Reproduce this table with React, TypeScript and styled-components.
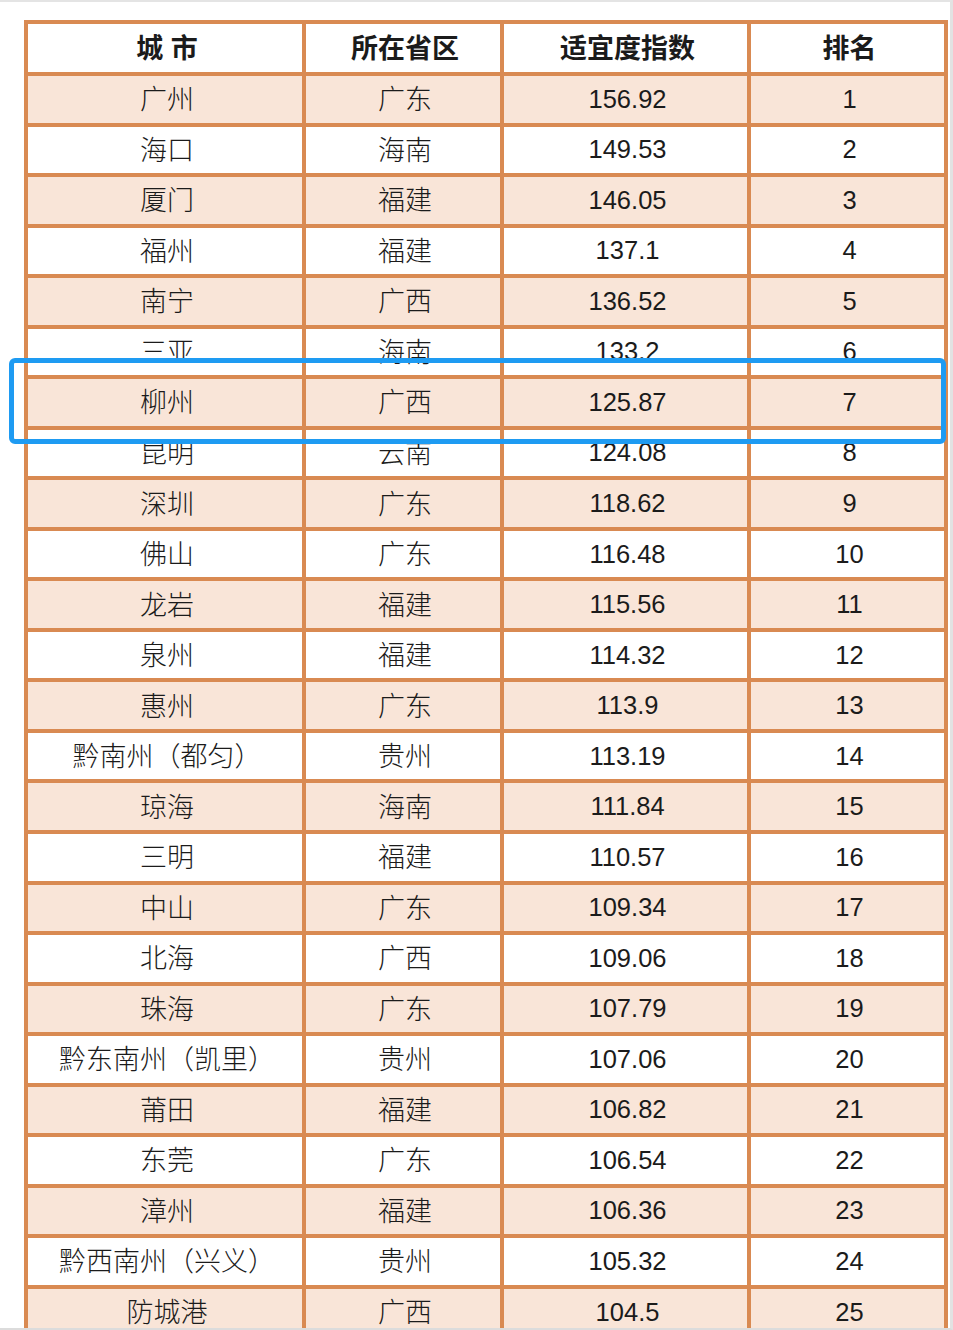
import styled, { createGlobalStyle } from 'styled-components';

const GlobalStyle = createGlobalStyle`
  html, body {
    margin: 0;
    padding: 0;
    background: #ffffff;
  }
`;

const border = '#d98a52';
const fill = '#f9e5d8';

const rows: [string, string, string][] = [
	['广州', '广东', '156.92'],
	['海口', '海南', '149.53'],
	['厦门', '福建', '146.05'],
	['福州', '福建', '137.1'],
	['南宁', '广西', '136.52'],
	['三亚', '海南', '133.2'],
	['柳州', '广西', '125.87'],
	['昆明', '云南', '124.08'],
	['深圳', '广东', '118.62'],
	['佛山', '广东', '116.48'],
	['龙岩', '福建', '115.56'],
	['泉州', '福建', '114.32'],
	['惠州', '广东', '113.9'],
	['黔南州（都匀）', '贵州', '113.19'],
	['琼海', '海南', '111.84'],
	['三明', '福建', '110.57'],
	['中山', '广东', '109.34'],
	['北海', '广西', '109.06'],
	['珠海', '广东', '107.79'],
	['黔东南州（凯里）', '贵州', '107.06'],
	['莆田', '福建', '106.82'],
	['东莞', '广东', '106.54'],
	['漳州', '福建', '106.36'],
	['黔西南州（兴义）', '贵州', '105.32'],
	['防城港', '广西', '104.5'],
];

const Frame = styled.div`
  position: relative;
  box-sizing: border-box;
  height: 1330px;
  overflow: hidden;
  border-top: 2px solid #e4e4e4;
  border-right: 3px solid #e2e2e2;
  border-bottom: 2px solid #dcdcdc;
  padding: 18px 0 0 24px;
  font-family: "Liberation Sans", "Noto Sans CJK SC", sans-serif;
  color: #1b1b1b;
`;

const Table = styled.table`
  width: 924px;
  table-layout: fixed;
  border-collapse: separate;
  border-spacing: 4px;
  background: ${border};
`;

const HeadCell = styled.th`
  height: 48px;
  padding: 0 0 3px 4px;
  box-sizing: border-box;
  background: #ffffff;
  font-size: 27px;
  font-weight: 700;
  text-align: center;
  vertical-align: middle;
`;

const Row = styled.tr<{ $shaded: boolean }>`
  background: ${p => (p.$shaded ? fill : '#ffffff')};
`;

const Cell = styled.td<{ $cjk?: boolean }>`
  height: 46.54px;
  padding: ${p => (p.$cjk ? '0 0 3px 4px' : '0 0 0 4px')};
  box-sizing: border-box;
  font-size: ${p => (p.$cjk ? '27px' : '25.5px')};
  font-weight: ${p => (p.$cjk ? 300 : 400)};
  text-align: center;
  vertical-align: middle;
  white-space: nowrap;
  background: inherit;
`;

const Highlight = styled.div`
  position: absolute;
  left: 9px;
  top: 356px;
  width: 937px;
  height: 86px;
  box-sizing: border-box;
  border: 5px solid #1e9bf2;
  border-radius: 6px;
  pointer-events: none;
`;

const App = () => {
	return (
		<>
			<GlobalStyle />
			<Frame>
				<Table>
					<colgroup>
						<col style={{ width: 274 }} />
						<col style={{ width: 194 }} />
						<col style={{ width: 243 }} />
						<col style={{ width: 193 }} />
					</colgroup>
					<thead>
						<tr>
							<HeadCell>城 市</HeadCell>
							<HeadCell>所在省区</HeadCell>
							<HeadCell>适宜度指数</HeadCell>
							<HeadCell>排名</HeadCell>
						</tr>
					</thead>
					<tbody>
						{rows.map(([city, province, score], i) => (
							<Row key={city} $shaded={i % 2 === 0}>
								<Cell $cjk>{city}</Cell>
								<Cell $cjk>{province}</Cell>
								<Cell>{score}</Cell>
								<Cell>{i + 1}</Cell>
							</Row>
						))}
					</tbody>
				</Table>
				<Highlight />
			</Frame>
		</>
	);
};

export default App;
